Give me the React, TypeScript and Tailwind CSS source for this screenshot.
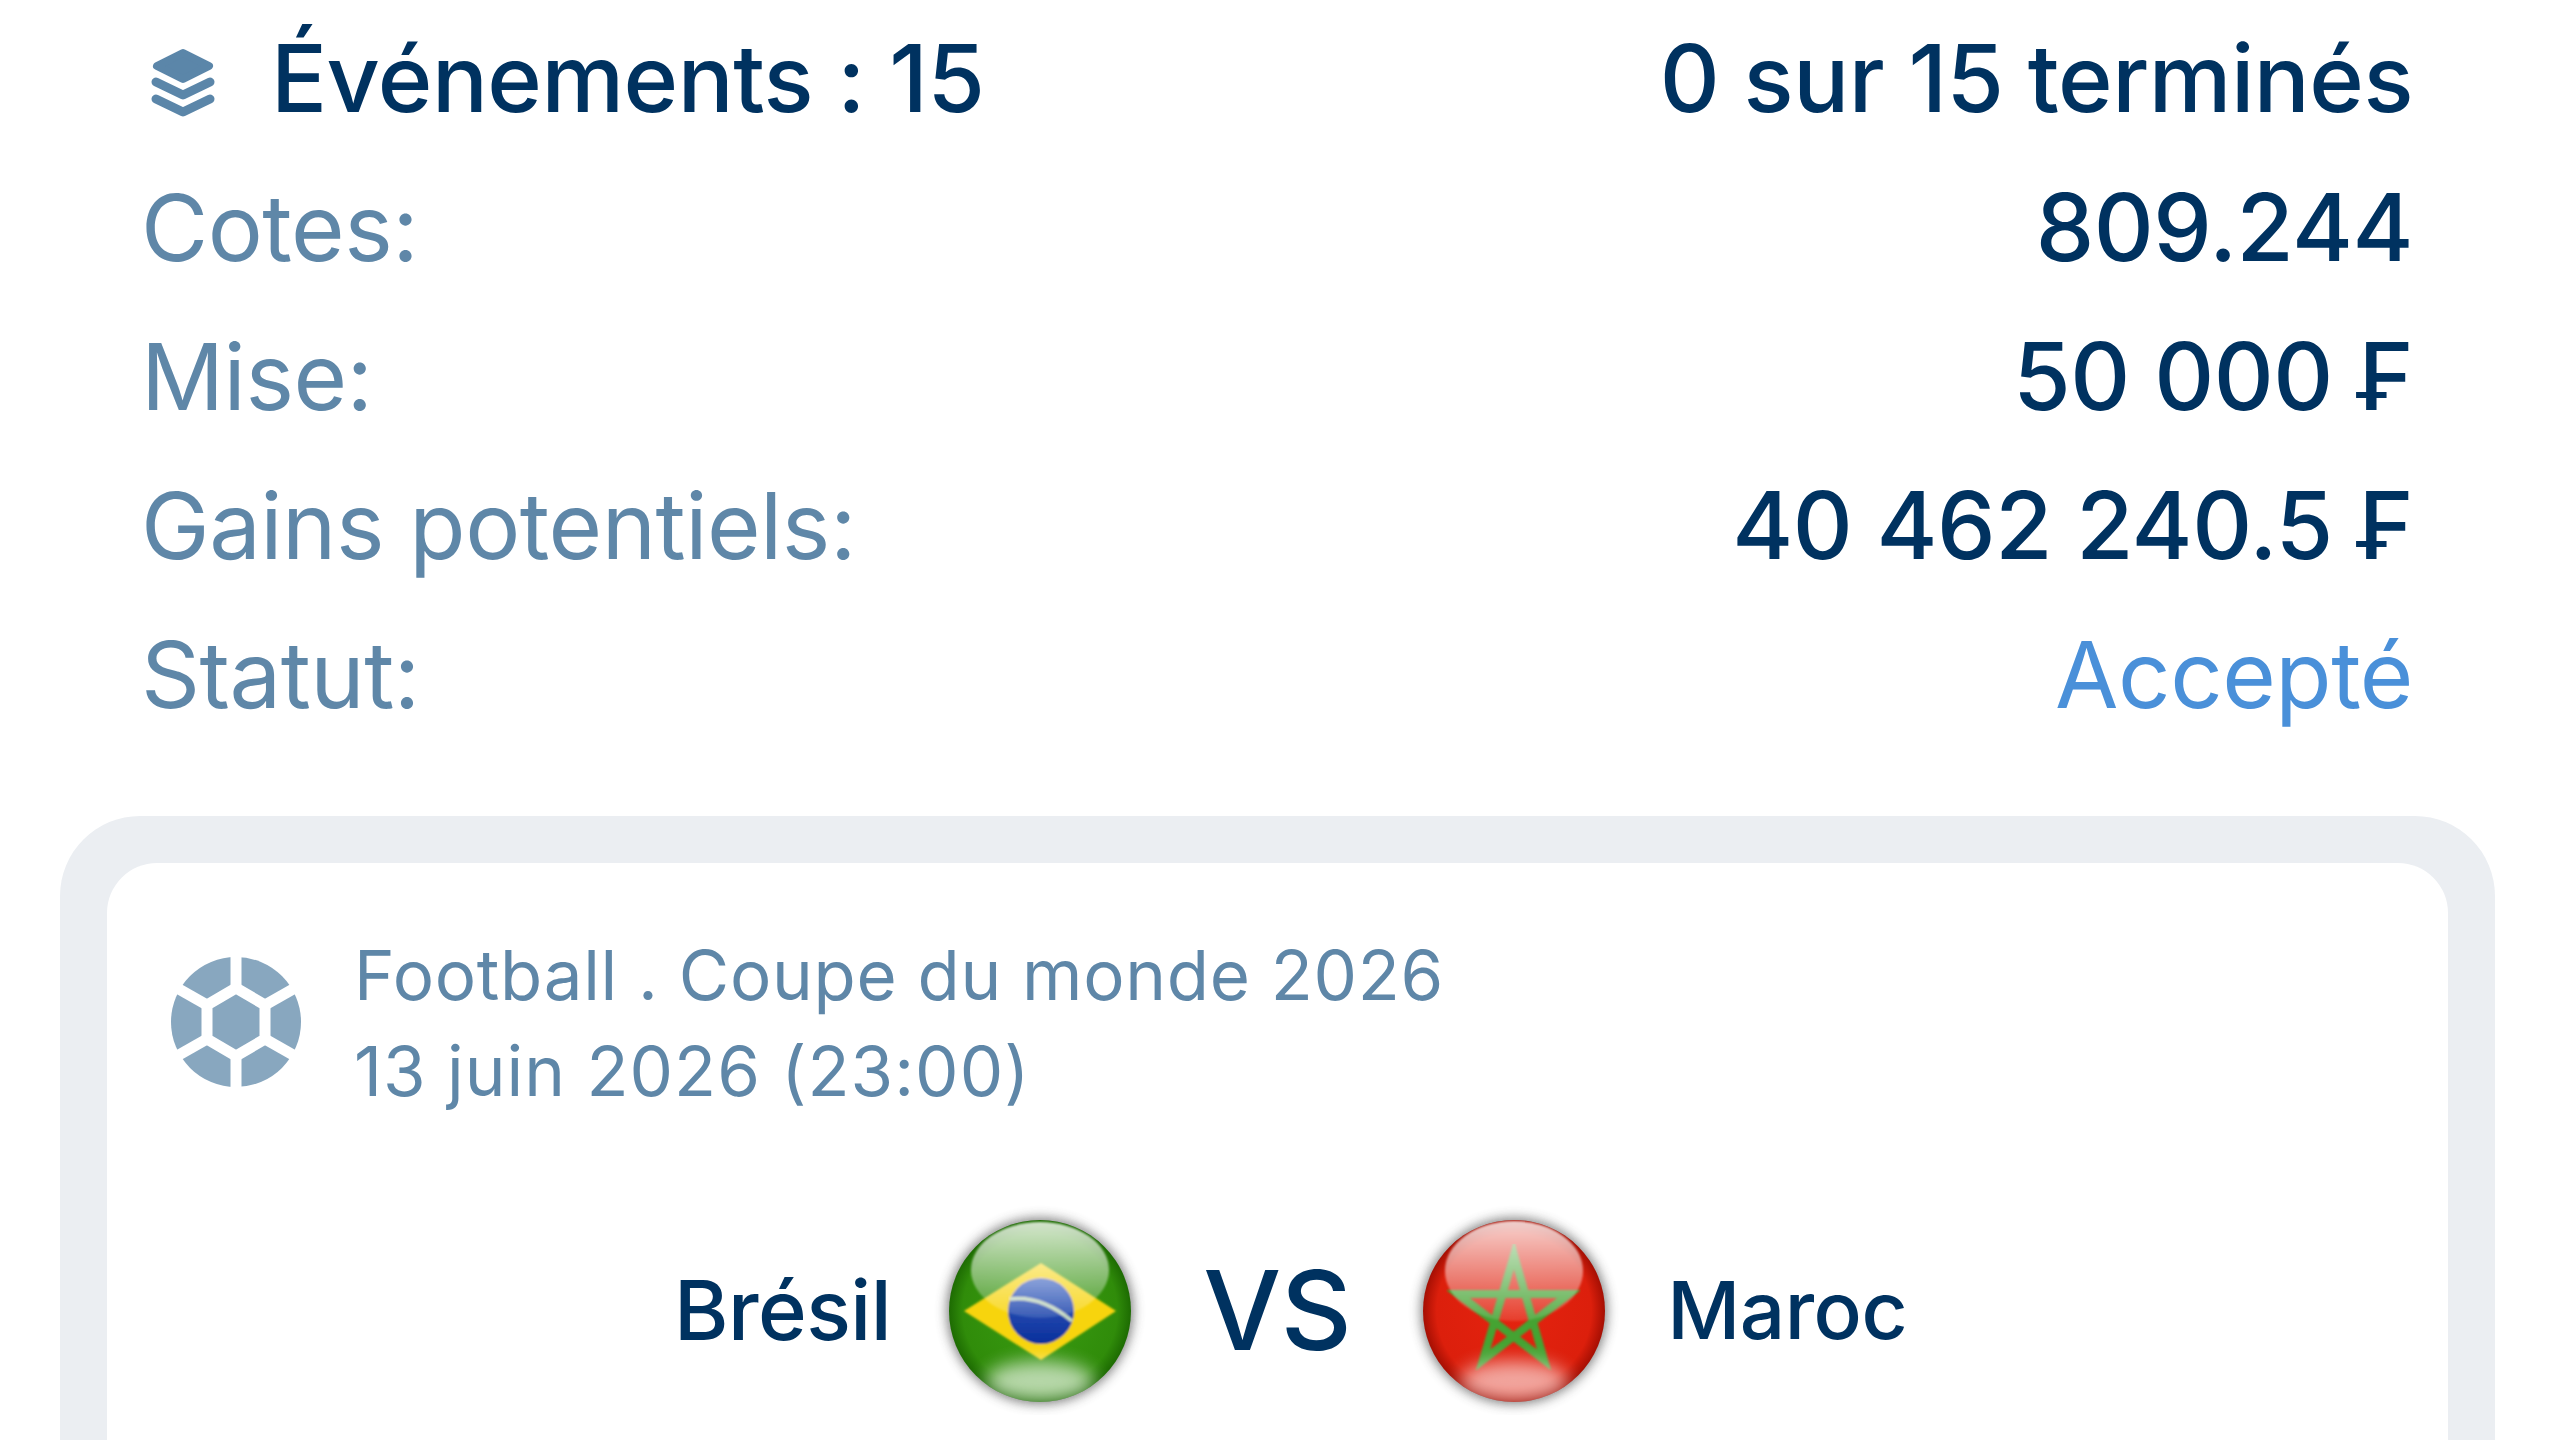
const rows = [
  { label: "Cotes:", value: "809.244" },
  { label: "Mise:", value: "50 000 ₣" },
  { label: "Gains potentiels:", value: "40 462 240.5 ₣" },
];

function LayersIcon() {
  return (
    <svg width="120" height="110" viewBox="0 0 120 110" className="shrink-0 ml-[-11px]">
      <polygon points="53,29 79,42 53,55 27,42" fill="#5b86a9" stroke="#5b86a9" strokeWidth="8" strokeLinejoin="round" />
      <polyline points="26,58 53,71 80,58" fill="none" stroke="#5b86a9" strokeWidth="9" strokeLinecap="round" strokeLinejoin="round" />
      <polyline points="26,75 53,88 80,75" fill="none" stroke="#5b86a9" strokeWidth="9" strokeLinecap="round" strokeLinejoin="round" />
    </svg>
  );
}

function BallIcon() {
  return (
    <svg width="170" height="160" viewBox="0 0 170 160" className="shrink-0 mt-[-6px]">
      <circle cx="86" cy="82" r="65" fill="#88a7bf" />
      <polygon points="86,48 115,65 115,99 86,116 57,99 57,65" fill="#88a7bf" stroke="#ffffff" strokeWidth="11" strokeLinejoin="round" />
      <g stroke="#ffffff" strokeWidth="11">
        <line x1="86" y1="48" x2="86" y2="10" />
        <line x1="115" y1="65" x2="152" y2="44" />
        <line x1="115" y1="99" x2="152" y2="120" />
        <line x1="86" y1="116" x2="86" y2="155" />
        <line x1="57" y1="99" x2="20" y2="120" />
        <line x1="57" y1="65" x2="20" y2="44" />
      </g>
    </svg>
  );
}

function BrazilFlag() {
  return (
    <svg width="220" height="210" viewBox="0 -6 220 210" className="shrink-0">
      <defs>
        <filter id="brShadow" x="-20%" y="-20%" width="140%" height="140%">
          <feGaussianBlur stdDeviation="6" />
        </filter>
        <filter id="brSoft"><feGaussianBlur stdDeviation="1.2" /></filter>
        <filter id="brGlow" x="-30%" y="-60%" width="160%" height="220%"><feGaussianBlur stdDeviation="9" /></filter>
        <radialGradient id="brGreen" cx="50%" cy="50%" r="50%">
          <stop offset="0%" stopColor="#3a9c12" />
          <stop offset="85%" stopColor="#308c0a" />
          <stop offset="100%" stopColor="#1d6b02" />
        </radialGradient>
        <linearGradient id="brGloss" x1="0" y1="0" x2="0" y2="1">
          <stop offset="0%" stopColor="#ffffff" stopOpacity="0.8" />
          <stop offset="60%" stopColor="#ffffff" stopOpacity="0.4" />
          <stop offset="100%" stopColor="#ffffff" stopOpacity="0.12" />
        </linearGradient>
        <linearGradient id="brGlobe" x1="0" y1="0" x2="0" y2="1">
          <stop offset="0%" stopColor="#3a62c0" />
          <stop offset="100%" stopColor="#0a2f9c" />
        </linearGradient>
        <clipPath id="brClip"><circle cx="111" cy="100" r="91" /></clipPath>
      </defs>
      <circle cx="111" cy="100" r="93" fill="#444444" opacity="0.7" filter="url(#brShadow)" />
      <circle cx="111" cy="100" r="91" fill="url(#brGreen)" />
      <g filter="url(#brSoft)">
        <polygon points="35,100 112,52 187,100 112,149" fill="#f7d411" />
        <circle cx="112" cy="100" r="33" fill="url(#brGlobe)" />
        <path d="M81 88 Q112 84 143 110" fill="none" stroke="#c7dcc0" strokeWidth="3.5" />
      </g>
      <g clipPath="url(#brClip)">
        <ellipse cx="111" cy="59" rx="69" ry="48" fill="url(#brGloss)" filter="url(#brSoft)" />
        <ellipse cx="111" cy="170" rx="54" ry="20" fill="#ffffff" opacity="0.65" filter="url(#brGlow)" />
      </g>
    </svg>
  );
}

function MoroccoFlag() {
  return (
    <svg width="220" height="210" viewBox="0 -6 220 210" className="shrink-0">
      <defs>
        <filter id="maShadow" x="-20%" y="-20%" width="140%" height="140%">
          <feGaussianBlur stdDeviation="6" />
        </filter>
        <filter id="maSoft"><feGaussianBlur stdDeviation="1.2" /></filter>
        <filter id="maGlow" x="-30%" y="-60%" width="160%" height="220%"><feGaussianBlur stdDeviation="9" /></filter>
        <radialGradient id="maRed" cx="50%" cy="50%" r="50%">
          <stop offset="0%" stopColor="#e4230f" />
          <stop offset="85%" stopColor="#dc1f0c" />
          <stop offset="100%" stopColor="#a50f03" />
        </radialGradient>
        <linearGradient id="maGloss" x1="0" y1="0" x2="0" y2="1">
          <stop offset="0%" stopColor="#ffffff" stopOpacity="0.8" />
          <stop offset="60%" stopColor="#ffffff" stopOpacity="0.4" />
          <stop offset="100%" stopColor="#ffffff" stopOpacity="0.12" />
        </linearGradient>
        <clipPath id="maClip"><circle cx="106" cy="100" r="91" /></clipPath>
      </defs>
      <circle cx="106" cy="100" r="93" fill="#444444" opacity="0.7" filter="url(#maShadow)" />
      <circle cx="106" cy="100" r="91" fill="url(#maRed)" />
      <polygon
        points="106,44 136,149 50,83 161,83 75,149"
        fill="none"
        stroke="#45a332"
        strokeWidth="8"
        strokeLinejoin="miter"
        filter="url(#maSoft)"
      />
      <g clipPath="url(#maClip)">
        <ellipse cx="106" cy="60" rx="69" ry="50" fill="url(#maGloss)" filter="url(#maSoft)" />
        <ellipse cx="106" cy="170" rx="54" ry="20" fill="#ffffff" opacity="0.6" filter="url(#maGlow)" />
      </g>
    </svg>
  );
}

export default function App() {
  return (
    <div className="h-[1440px] w-full overflow-hidden bg-white font-['Inter',sans-serif] text-[92px] tracking-[-0.5px]">
      <div className="flex flex-col pl-[141px] pr-[147px] pt-[4px]">
        <div className="flex h-[149px] items-center justify-between text-[93px] font-medium text-[#003260]">
          <div className="flex items-center">
            <LayersIcon />
            <span className="ml-[21px]">Événements : 15</span>
          </div>
          <span>0 sur 15 terminés</span>
        </div>
        {rows.map((row) => (
          <div key={row.label} className="flex h-[149px] items-center justify-between">
            <span className="text-[#5f87a8]">{row.label}</span>
            <span className="text-[93px] font-medium text-[#003260]">{row.value}</span>
          </div>
        ))}
        <div className="flex h-[149px] items-center justify-between">
          <span className="text-[#5f87a8]">Statut:</span>
          <span className="text-[#4a90d9]">Accepté</span>
        </div>
      </div>

      <div className="ml-[60px] mr-[65px] mt-[67px] h-[800px] rounded-t-[80px] bg-[#ebeef2] px-[47px] pt-[47px]">
        <div className="h-full rounded-t-[50px] bg-white">
          <div className="flex items-center pl-[43px] pt-[64px]">
            <BallIcon />
            <div className="ml-[34px] text-[69px] leading-[96px] tracking-[1px] text-[#5f87a8]">
              <div className="tracking-[0.7px]">Football . Coupe du monde 2026</div>
              <div>13 juin 2026 (23:00)</div>
            </div>
          </div>
          <div className="mt-[86px] flex items-center justify-center pl-[26px]">
            <span className="text-[83px] font-medium text-[#003260]">Brésil</span>
            <div className="ml-[38px]"><BrazilFlag /></div>
            <span className="ml-[54px] text-[110px] font-medium text-[#003260]">VS</span>
            <div className="ml-[57px]"><MoroccoFlag /></div>
            <span className="ml-[39px] text-[80px] font-medium text-[#003260]">Maroc</span>
          </div>
        </div>
      </div>
    </div>
  );
}
